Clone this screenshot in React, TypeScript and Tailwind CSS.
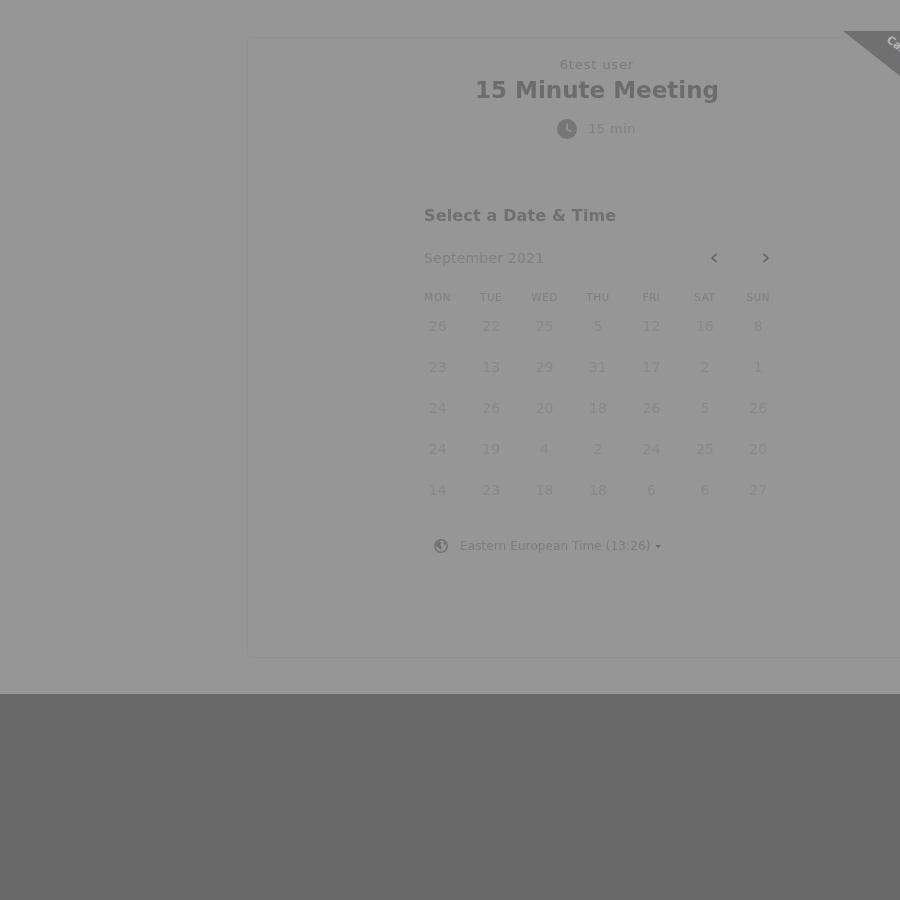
const weekDays = ['MON', 'TUE', 'WED', 'THU', 'FRI', 'SAT', 'SUN'];

const weeks = [
  [26, 22, 25, 5, 12, 16, 8],
  [23, 13, 29, 31, 17, 2, 1],
  [24, 26, 20, 18, 26, 5, 26],
  [24, 19, 4, 2, 24, 25, 20],
  [14, 23, 18, 18, 6, 6, 27],
];

function ClockIcon() {
  return (
    <svg width="20" height="20" viewBox="0 0 20 20" className="block">
      <circle cx="10" cy="10" r="10" fill="#767676" />
      <path d="M10 4.5V10.5L14.5 12.5" fill="none" stroke="#969696" strokeWidth="1.8" />
    </svg>
  );
}

function GlobeIcon() {
  return (
    <svg width="14" height="14" viewBox="0 0 14 14" className="block">
      <circle cx="7" cy="7" r="6.2" fill="none" stroke="#6f6f6f" strokeWidth="1.4" />
      <path d="M2 4.5L5.5 2L7.5 4L6 6L8 8L6.5 11L4.5 8.5L2 7Z" fill="#6f6f6f" />
      <path d="M9.5 2.5L12.5 5L10 6Z" fill="#6f6f6f" />
    </svg>
  );
}

function Chevron({ flip }: { flip?: boolean }) {
  return (
    <svg width="8" height="10" viewBox="0 0 8 10" className={flip ? 'block rotate-180' : 'block'}>
      <path d="M6.5 1L2 5L6.5 9" fill="none" stroke="#5a5a5a" strokeWidth="1.3" />
    </svg>
  );
}

export default function App() {
  return (
    <div className="h-[900px] w-[900px] overflow-hidden bg-[#696969] font-['DejaVu_Sans',sans-serif]">
      <div className="relative h-[694px] overflow-hidden bg-[#969696] pl-[247px] pt-[37px]">
        <div className="h-[621px] w-[700px] rounded-[6px] border border-[#919191]">
          <div className="flex h-[144px] flex-col items-center border-b border-[#949494] pt-[18px] blur-[0.5px]">
            <p className="text-[13px] leading-[17px] tracking-[0.9px] text-[#7a7a7a]">6test user</p>
            <h1 className="mt-[1px] text-[23px] leading-[32px] font-bold text-[#6c6c6c]">15 Minute Meeting</h1>
            <div className="mt-[13px] flex items-center gap-[11px] pr-[1px]">
              <ClockIcon />
              <span className="text-[13px] leading-[20px] tracking-[0.4px] text-[#808080]">15 min</span>
            </div>
          </div>

          <div className="ml-[163px] w-[374px] blur-[0.5px]">
            <h2 className="mt-[24px] pl-[13px] text-[16px] leading-[20px] font-bold tracking-[0.15px] text-[#707070]">Select a Date &amp; Time</h2>
            <div className="mt-[22px] flex h-[20px] items-center justify-between pl-[13px] pr-[15px]">
              <span className="text-[14px] tracking-[0.2px] text-[#808080]">September 2021</span>
              <div className="flex items-center gap-[44px]">
                <Chevron />
                <Chevron flip />
              </div>
            </div>
            <div className="mt-[22px] grid grid-cols-7">
              {weekDays.map((day) => (
                <span key={day} className="text-center text-[10.5px] leading-[14px] tracking-[0.5px] text-[#7f7f7f]">{day}</span>
              ))}
            </div>
            <div className="mt-[12px] grid grid-cols-7 gap-y-[21px]">
              {weeks.flat().map((value, i) => (
                <span key={i} className="text-center text-[14px] leading-[20px] text-[#888888]">{value}</span>
              ))}
            </div>
            <div className="mt-[38px] flex items-center pl-[23px]">
              <GlobeIcon />
              <span className="ml-[12px] text-[12px] leading-[16px] tracking-[0.1px] text-[#7c7c7c]">Eastern European Time (13:26)</span>
              <span className="ml-[5px] mt-[1px] h-0 w-0 border-x-[3px] border-t-[3px] border-x-transparent border-t-[#6a6a6a]" />
            </div>
          </div>
        </div>

        <div className="absolute right-0 top-[31px] h-[46px] w-[57px] overflow-hidden">
          <svg width="57" height="46" viewBox="0 0 57 46" className="block">
            <path d="M0 0H57V45Z" fill="#707070" />
          </svg>
          <span className="absolute left-[39px] top-[17px] rotate-[38deg] text-[11px] leading-[14px] font-bold text-[#b4b4b4]">Calendly</span>
        </div>
      </div>
    </div>
  );
}
